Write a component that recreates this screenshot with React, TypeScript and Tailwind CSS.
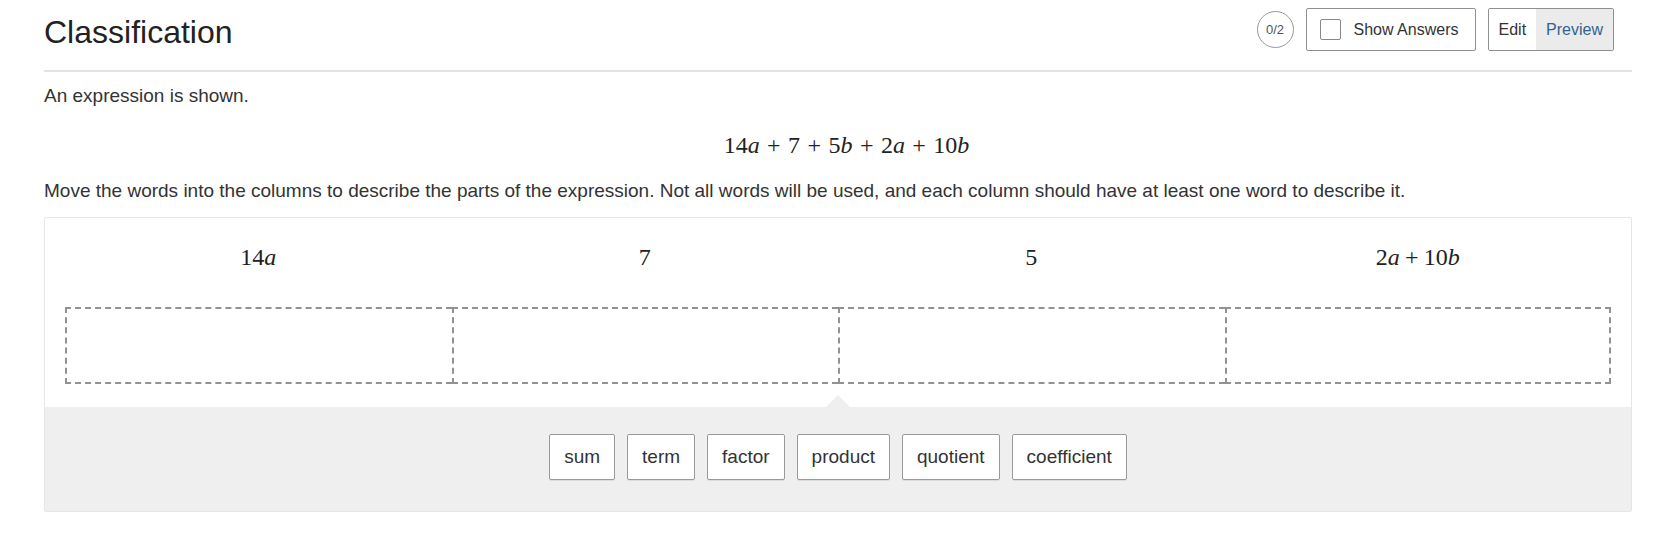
import React from "react";

const M = ({ children }: { children: React.ReactNode }) => (
  <span className="italic">{children}</span>
);
const Plus = () => <span className="mx-[0.222em]">+</span>;
const PlusWide = () => <span className="mx-[0.31em]">+</span>;

export default function App() {
  const words = ["sum", "term", "factor", "product", "quotient", "coefficient"];
  const labels: React.ReactNode[] = [
    <>14<M>a</M></>,
    <>7</>,
    <>5</>,
    <>2<M>a</M><Plus />10<M>b</M></>,
  ];
  return (
    <div className="min-h-[549px] bg-white font-['Liberation_Sans',Arial,sans-serif] text-[#333]">
      <div className="ml-[44px] w-[1588px]">
        <header className="flex h-[72px] items-start justify-between border-b-2 border-[#e3e3e3]">
          <h1 className="pt-[14px] text-[32px] font-normal leading-[37px] text-[#222]">Classification</h1>
          <div className="mr-[18px] mt-[8px] flex items-center gap-[12px]">
            <div className="flex h-[37px] w-[37px] items-center justify-center rounded-full border-[1.5px] border-[#999] text-[13px] text-[#555]">
              0/2
            </div>
            <button className="flex h-[43px] w-[170px] items-center rounded-[2px] border border-[#8f8f8f] bg-white pl-[13px] text-[16px] text-[#333]">
              <span className="h-[21px] w-[21px] rounded-[2px] border-[1.5px] border-[#888] bg-white" />
              <span className="ml-[13px]">Show Answers</span>
            </button>
            <div className="flex h-[43px] overflow-hidden rounded-[2px] border border-[#8f8f8f] text-[16px]">
              <span className="flex items-center bg-white px-[10px] text-[#333]">Edit</span>
              <span className="flex items-center bg-[#ebebeb] px-[10px] text-[#2f6391]">Preview</span>
            </div>
          </div>
        </header>

        <p className="mt-[10px] text-[19px] leading-[27px]">An expression is shown.</p>

        <div className="mt-[21px] pl-[17px] text-center font-['Liberation_Serif','Times_New_Roman',serif] text-[24px] leading-[30px] text-[#222]">
          14<M>a</M><PlusWide />7<PlusWide />5<M>b</M><PlusWide />2<M>a</M><PlusWide />10<M>b</M>
        </div>

        <p className="mt-[17px] text-[19px] leading-[27px]">
          Move the words into the columns to describe the parts of the expression. Not all words will be used, and each column should have at least one word to describe it.
        </p>

        <div className="mt-[13px] rounded-[2px] border border-[#e6e6e6]">
          <div className="px-[20px] pb-[23px] pt-[24px]">
            <div className="grid grid-cols-4 text-center font-['Liberation_Serif','Times_New_Roman',serif] text-[24px] leading-[30px] text-[#222]">
              {labels.map((l, i) => (
                <div key={i}>{l}</div>
              ))}
            </div>
            <div className="mt-[35px] grid h-[77px] grid-cols-4">
              <div className="border-y-2 border-l-2 border-dashed border-[#929292]" />
              <div className="border-y-2 border-l-2 border-dashed border-[#929292]" />
              <div className="border-y-2 border-l-2 border-dashed border-[#929292]" />
              <div className="border-2 border-dashed border-[#929292]" />
            </div>
          </div>
          <div className="relative flex justify-center gap-[12px] bg-[#efefef] pb-[31px] pt-[27px]">
            <span className="absolute left-1/2 top-[-12px] h-0 w-0 -translate-x-1/2 border-b-[12px] border-l-[12px] border-r-[12px] border-b-[#efefef] border-l-transparent border-r-transparent" />
            {words.map((w) => (
              <div
                key={w}
                className="flex h-[46px] items-center rounded-[2px] border border-[#9a9a9a] bg-white px-[14px] text-[19px] text-[#333] shadow-[0_1px_0_rgba(0,0,0,0.08)]"
              >
                {w}
              </div>
            ))}
          </div>
        </div>
      </div>
    </div>
  );
}
